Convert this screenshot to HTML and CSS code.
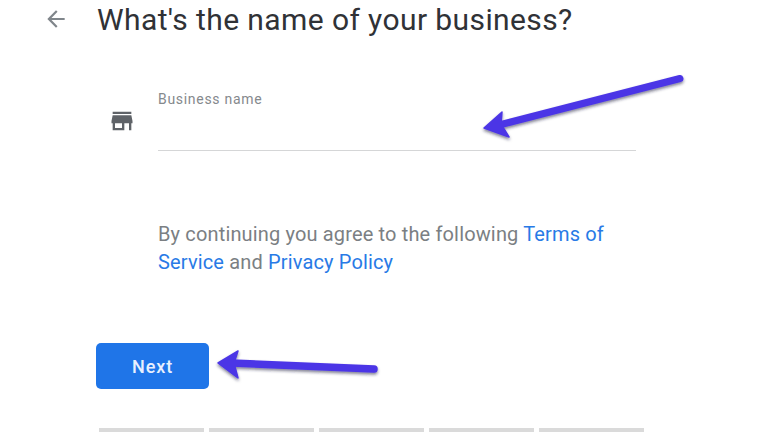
FILE: index.html
```html
<!DOCTYPE html>
<html lang="en">
<head>
<meta charset="utf-8">
<title>Business name</title>
<link rel="stylesheet" href="styles.css">
</head>
<body>
<main class="page">
  <header class="header">
    <svg class="back" viewBox="0 0 24 24" aria-hidden="true"><path d="M20 11H7.83l5.59-5.59L12 4l-8 8 8 8 1.41-1.41L7.83 13H20z"/></svg>
    <h1 class="title">What's the name of your business?</h1>
  </header>
  <section class="field-row">
    <svg class="store" viewBox="0 0 24 24" aria-hidden="true"><path d="M20 4H4v2h16V4zm1 10v-2l-1-5H4l-1 5v2h1v6h10v-6h4v6h2v-6h1zm-9 4H6v-4h6v4z"/></svg>
    <div class="field">
      <label class="label">Business name</label>
    </div>
  </section>
  <p class="terms">By continuing you agree to the following <a class="link">Terms of Service</a> and <a class="link">Privacy Policy</a></p>
  <button class="next">Next</button>
  <div class="progress">
    <span class="seg"></span><span class="seg"></span><span class="seg"></span><span class="seg"></span><span class="seg"></span>
  </div>
</main>
<svg class="arrows" viewBox="0 0 768 432" aria-hidden="true">
  <defs>
    <filter id="sh" x="-20%" y="-50%" width="140%" height="200%">
      <feDropShadow dx="0" dy="2" stdDeviation="1.6" flood-color="#1c1c40" flood-opacity="0.55"/>
    </filter>
  </defs>
  <g filter="url(#sh)" fill="#4c36e6" stroke="#4c36e6" stroke-linejoin="round">
    <path d="M680 78.5 L503 124" fill="none" stroke-width="7" stroke-linecap="round"/>
    <path d="M484 128 L502 112 L501 124 L509 137 Z" stroke-width="1.5"/>
    <path d="M374 369 L232 363" fill="none" stroke-width="7.5" stroke-linecap="round"/>
    <path d="M218 363 L238 351 L234 363 L238 378 Z" stroke-width="1.5"/>
  </g>
</svg>
</body>
</html>
```
FILE: styles.css
```css
html, body {
  margin: 0;
  padding: 0;
  background: #fff;
  width: 768px;
  height: 432px;
  overflow: hidden;
}
.page {
  font-family: Roboto, "Liberation Sans", sans-serif;
  display: flex;
  flex-direction: column;
  align-items: flex-start;
  height: 432px;
  box-sizing: border-box;
  overflow: hidden;
}
.header {
  display: flex;
  align-items: center;
  height: 38px;
  padding-left: 43px;
}
.back {
  width: 26px;
  height: 26px;
  fill: #80868b;
  margin-right: 28px;
}
.title {
  margin: 0;
  padding-top: 1px;
  font-size: 30px;
  font-weight: 400;
  line-height: 38px;
  letter-spacing: 0.4px;
  color: #303236;
  white-space: nowrap;
}
.field-row {
  display: flex;
  align-items: flex-end;
  margin-top: 51px;
  padding-left: 108px;
}
.store {
  width: 28px;
  height: 28px;
  fill: #5f6368;
  margin-right: 22px;
  margin-bottom: 16px;
}
.field {
  width: 478px;
  height: 62px;
  box-sizing: border-box;
  border-bottom: 1px solid #d5d6d7;
}
.label {
  display: block;
  font-size: 14px;
  line-height: 20px;
  letter-spacing: 0.7px;
  color: #85898d;
}
.terms {
  margin: 69px 0 0 158px;
  width: 470px;
  font-size: 20px;
  line-height: 28px;
  letter-spacing: 0.15px;
  color: #7b7f83;
}
.link {
  color: #287ae6;
}
.next {
  margin: 67px 0 0 96px;
  width: 113px;
  height: 46px;
  border: 0;
  border-radius: 5px;
  background: #1f75e8;
  color: #e8f0fe;
  font-family: Roboto, "Liberation Sans", sans-serif;
  font-size: 18px;
  font-weight: 500;
  letter-spacing: 0.9px;
}
.progress {
  display: flex;
  gap: 5px;
  margin: 39px 0 0 99px;
}
.seg {
  width: 105px;
  height: 4px;
  background: #dadada;
}
.arrows {
  position: absolute;
  left: 0;
  top: 0;
  width: 768px;
  height: 432px;
  pointer-events: none;
}
```
